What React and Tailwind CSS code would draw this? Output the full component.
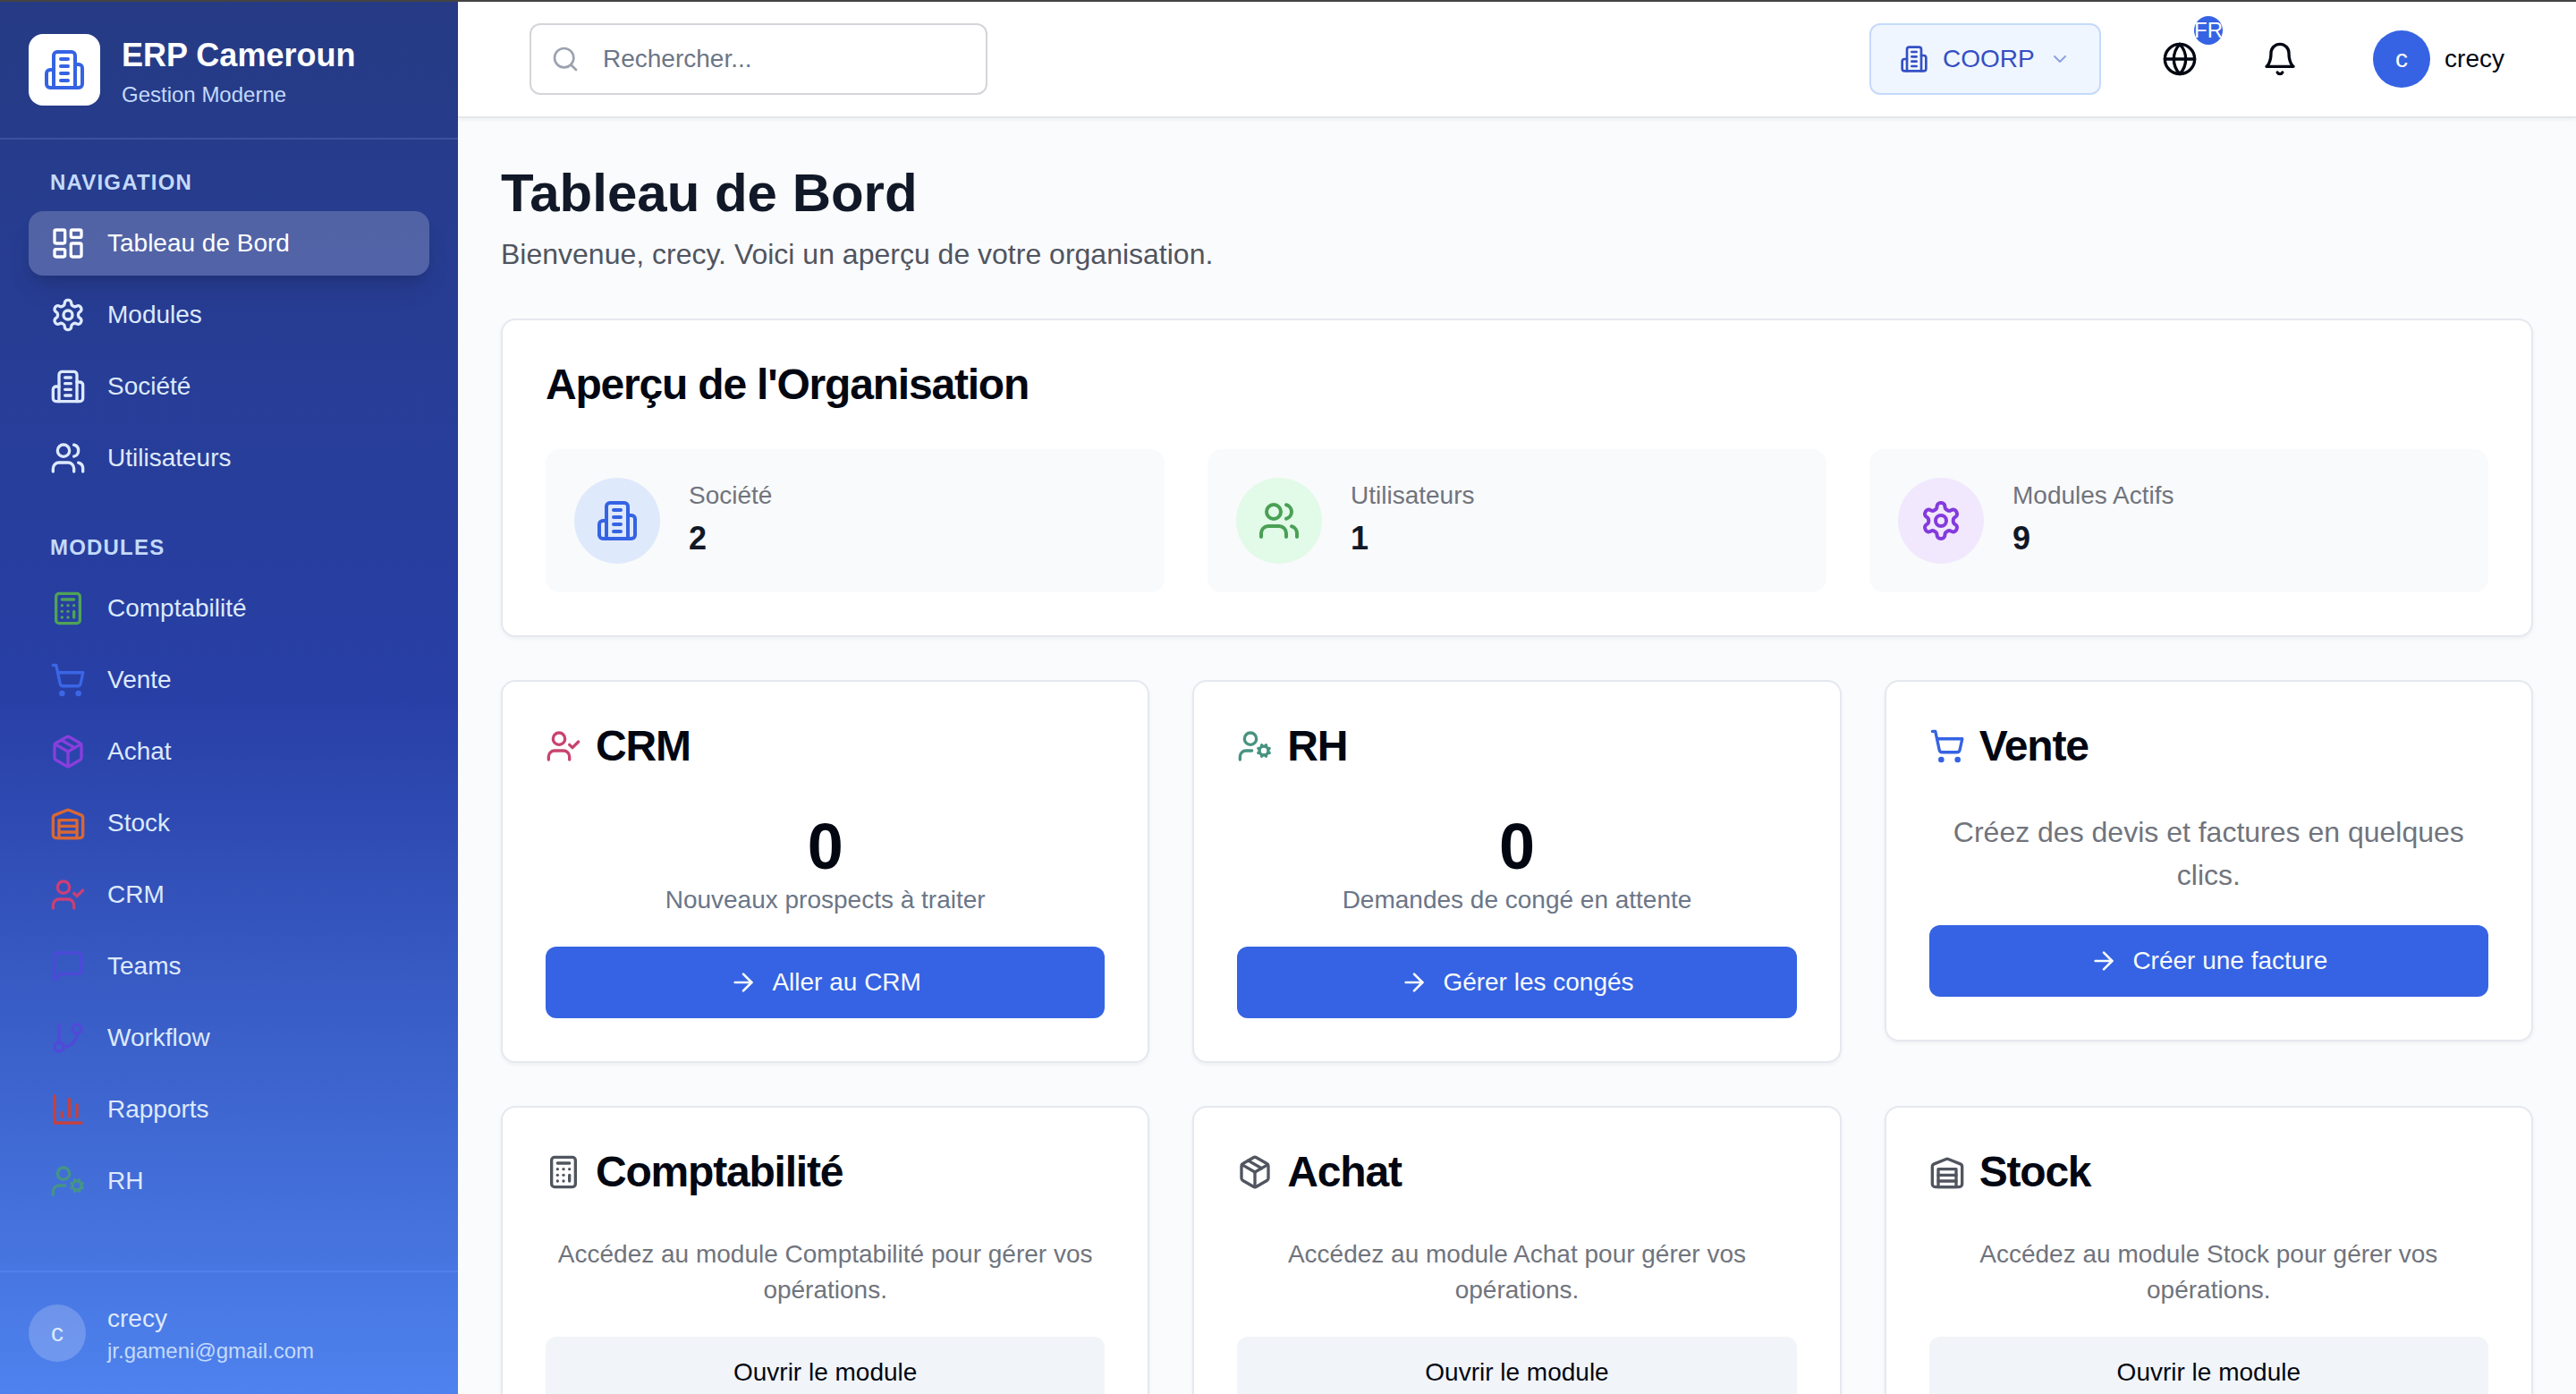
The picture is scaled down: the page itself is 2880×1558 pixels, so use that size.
import {
  ArrowRight,
  Calculator,
  ChevronDown,
  GitBranch,
  Globe,
  LayoutDashboard,
  Package,
  Search,
  ShoppingCart,
  UserCheck,
  UserCog,
  Users
} from 'lucide-react';

const Icon = ({ className, children }) => (
  <svg
    viewBox="0 0 24 24"
    fill="none"
    stroke="currentColor"
    strokeWidth="2"
    strokeLinecap="round"
    strokeLinejoin="round"
    aria-hidden="true"
    className={className}
  >
    {children}
  </svg>
);

const Building = ({ className }) => (
  <Icon className={className}>
    <path d="M6 22V4a2 2 0 0 1 2-2h8a2 2 0 0 1 2 2v18Z" />
    <path d="M6 12H4a2 2 0 0 0-2 2v6a2 2 0 0 0 2 2h2" />
    <path d="M18 9h2a2 2 0 0 1 2 2v9a2 2 0 0 1-2 2h-2" />
    <path d="M10 6h4M10 10h4M10 14h4M10 18h4" />
  </Icon>
);

const Settings = ({ className }) => (
  <Icon className={className}>
    <path d="M12.22 2h-.44a2 2 0 0 0-2 2v.18a2 2 0 0 1-1 1.73l-.43.25a2 2 0 0 1-2 0l-.15-.08a2 2 0 0 0-2.73.73l-.22.38a2 2 0 0 0 .73 2.73l.15.1a2 2 0 0 1 1 1.72v.51a2 2 0 0 1-1 1.74l-.15.09a2 2 0 0 0-.73 2.73l.22.38a2 2 0 0 0 2.73.73l.15-.08a2 2 0 0 1 2 0l.43.25a2 2 0 0 1 1 1.73V20a2 2 0 0 0 2 2h.44a2 2 0 0 0 2-2v-.18a2 2 0 0 1 1-1.73l.43-.25a2 2 0 0 1 2 0l.15.08a2 2 0 0 0 2.73-.73l.22-.39a2 2 0 0 0-.73-2.73l-.15-.08a2 2 0 0 1-1-1.74v-.5a2 2 0 0 1 1-1.74l.15-.09a2 2 0 0 0 .73-2.73l-.22-.38a2 2 0 0 0-2.73-.73l-.15.08a2 2 0 0 1-2 0l-.43-.25a2 2 0 0 1-1-1.73V4a2 2 0 0 0-2-2z" />
    <circle cx="12" cy="12" r="3" />
  </Icon>
);

const Warehouse = ({ className }) => (
  <Icon className={className}>
    <path d="M22 8.35V20a2 2 0 0 1-2 2H4a2 2 0 0 1-2-2V8.35A2 2 0 0 1 3.26 6.5l8-3.2a2 2 0 0 1 1.48 0l8 3.2A2 2 0 0 1 22 8.35Z" />
    <path d="M6 18h12M6 14h12" />
    <rect width="12" height="12" x="6" y="10" />
  </Icon>
);

const MessageSquare = ({ className }) => (
  <Icon className={className}>
    <path d="M21 15a2 2 0 0 1-2 2H7l-4 4V5a2 2 0 0 1 2-2h14a2 2 0 0 1 2 2z" />
  </Icon>
);

const BarChart = ({ className }) => (
  <Icon className={className}>
    <path d="M3 3v18h18M18 17V9M13 17V5M8 17v-3" />
  </Icon>
);

const Bell = ({ className }) => (
  <Icon className={className}>
    <path d="M6 8a6 6 0 0 1 12 0c0 7 3 9 3 9H3s3-2 3-9" />
    <path d="M10.3 21a1.94 1.94 0 0 0 3.4 0" />
  </Icon>
);

const navigation = [
  { label: 'Tableau de Bord', icon: LayoutDashboard, active: true },
  { label: 'Modules', icon: Settings },
  { label: 'Société', icon: Building },
  { label: 'Utilisateurs', icon: Users }
];

const modules = [
  { label: 'Comptabilité', icon: Calculator, color: 'text-[#4fa356]' },
  { label: 'Vente', icon: ShoppingCart, color: 'text-[#3b66e6]' },
  { label: 'Achat', icon: Package, color: 'text-[#883fdc]' },
  { label: 'Stock', icon: Warehouse, color: 'text-[#d96834]' },
  { label: 'CRM', icon: UserCheck, color: 'text-[#cb3f76]' },
  { label: 'Teams', icon: MessageSquare, color: 'text-[#4d49d8]' },
  { label: 'Workflow', icon: GitBranch, color: 'text-[#5149d8]' },
  { label: 'Rapports', icon: BarChart, color: 'text-[#c5423f]' },
  { label: 'RH', icon: UserCog, color: 'text-[#459487]' }
];

const stats = [
  { label: 'Société', value: 2, icon: Building, color: 'bg-[#dfe9fc] text-[#3563e3]' },
  { label: 'Utilisateurs', value: 1, icon: Users, color: 'bg-[#e2fae8] text-[#4aa055]' },
  { label: 'Modules Actifs', value: 9, icon: Settings, color: 'bg-[#f1e8fd] text-[#843bdc]' }
];

const otherModules = [
  { label: 'Comptabilité', icon: Calculator },
  { label: 'Achat', icon: Package },
  { label: 'Stock', icon: Warehouse }
];

const NavSection = ({ title, items }) => (
  <section>
    <h2 className="mb-4 px-6 text-[24px] leading-8 font-bold tracking-wider text-[#c3dafb] uppercase">
      {title}
    </h2>
    <ul className="space-y-2">
      {items.map(({ label, icon: ItemIcon, color, active }) => (
        <li key={label}>
          <a
            href="#"
            className={`flex h-[72px] items-center gap-6 rounded-2xl px-6 text-[28px] leading-10 ${
              active
                ? 'bg-white/20 text-white shadow-[0_20px_30px_-6px_rgba(0,0,0,0.1),0_8px_12px_-4px_rgba(0,0,0,0.1)]'
                : 'text-[#dde9fd]'
            }`}
          >
            <ItemIcon className={`size-10 shrink-0 ${color || ''}`} />
            {label}
          </a>
        </li>
      ))}
    </ul>
  </section>
);

const Sidebar = () => (
  <aside className="flex w-[512px] shrink-0 flex-col bg-linear-to-b/srgb from-[#263b84] via-[#283fa6] to-[#4e82ee]">
    <div className="flex items-center gap-6 border-b-2 border-[#3a52a0] p-8">
      <div className="flex size-20 items-center justify-center rounded-2xl bg-white">
        <Building className="size-12 text-[#3563e3]" />
      </div>
      <div>
        <h1 className="text-[36px] leading-14 font-bold text-white">ERP Cameroun</h1>
        <p className="text-[24px] leading-8 text-[#c3dafb]">Gestion Moderne</p>
      </div>
    </div>
    <nav className="flex-1 space-y-12 p-8">
      <NavSection title="Navigation" items={navigation} />
      <NavSection title="Modules" items={modules} />
    </nav>
    <div className="flex items-center gap-6 border-t-2 border-[#5280ea] p-8">
      <div className="flex size-16 items-center justify-center rounded-full bg-white/20 text-[28px] font-medium text-[#dde9fd]">
        c
      </div>
      <div>
        <p className="text-[28px] leading-10 text-[#dde9fd]">crecy</p>
        <p className="text-[24px] leading-8 text-[#c3dafb]">jr.gameni@gmail.com</p>
      </div>
    </div>
  </aside>
);

const Header = () => (
  <header className="z-10 flex items-center justify-between border-b-2 border-[#e5e7eb] bg-white px-12 py-6 shadow-[0_2px_4px_rgba(0,0,0,0.05)]">
    <div className="relative ml-8 w-[512px]">
      <Search className="absolute top-6 left-6 size-8 text-[#9ca3af]" />
      <input
        type="search"
        aria-label="Rechercher"
        placeholder="Rechercher..."
        className="h-20 w-full rounded-xl border-2 border-[#d3d5d9] bg-white pr-6 pl-20 text-[28px] placeholder:text-[#6b7688]"
      />
    </div>
    <div className="flex items-center gap-8">
      <label className="mr-4 flex h-20 items-center gap-4 rounded-xl border-2 border-[#c5dafb] bg-[#f0f6ff] px-8 text-[#3450c4]">
        <Building className="size-8" />
        <select aria-label="Société" className="appearance-none bg-transparent text-[28px] leading-10">
          <option>COORP</option>
        </select>
        <ChevronDown className="size-6 opacity-50" />
      </label>
      <button aria-label="Langue" className="relative flex size-20 items-center justify-center rounded-xl">
        <Globe className="size-10" />
        <span className="absolute -top-2 -right-2 flex size-8 items-center justify-center rounded-full bg-[#3563e3] text-[24px] leading-8 text-white">
          FR
        </span>
      </button>
      <button aria-label="Notifications" className="flex size-20 items-center justify-center rounded-xl">
        <Bell className="size-10" />
      </button>
      <button className="flex h-20 items-center gap-4 rounded-xl px-8 text-[28px]">
        <span className="flex size-16 items-center justify-center rounded-full bg-[#3563e3] font-medium text-white">
          c
        </span>
        crecy
      </button>
    </div>
  </header>
);

const Card = ({ children }) => (
  <section className="rounded-2xl border-2 border-[#e5e8ee] bg-white p-12 shadow-[0_2px_4px_rgba(0,0,0,0.05)]">
    {children}
  </section>
);

const ModuleCard = ({ title, icon: TitleIcon, color, children }) => (
  <Card>
    <div className="mb-12 flex items-center gap-4">
      <TitleIcon className={`size-10 ${color}`} />
      <h3 className="text-[48px] leading-12 font-bold tracking-tight">{title}</h3>
    </div>
    <div className="text-center">{children}</div>
  </Card>
);

const ActionButton = ({ children }) => (
  <button className="mt-8 flex h-20 w-full items-center justify-center gap-4 rounded-xl bg-[#3563e3] text-[28px] text-[#f8fafc]">
    <ArrowRight className="size-8" />
    {children}
  </button>
);

const Counter = ({ value, label }) => (
  <>
    <p className="text-[72px] leading-20 font-bold">{value}</p>
    <p className="text-[28px] leading-10 text-[#6b7688]">{label}</p>
  </>
);

const App = () => {
  return (
    <div className="flex h-screen overflow-hidden border-t-2 border-[#444444] bg-[#fafbfd] font-['Liberation_Sans',Arial,sans-serif] text-[#030712]">
      <Sidebar />
      <div className="flex min-w-0 flex-1 flex-col">
        <Header />
        <main className="min-h-0 flex-1 space-y-12 overflow-y-auto p-12 [scrollbar-width:none]">
          <div>
            <h1 className="mb-2 text-[60px] leading-18 font-bold text-[#111827]">Tableau de Bord</h1>
            <p className="text-[32px] leading-12 text-[#50555f]">
              Bienvenue, crecy. Voici un aperçu de votre organisation.
            </p>
          </div>

          <Card>
            <h2 className="mb-12 text-[48px] leading-12 font-bold tracking-tight">Aperçu de l'Organisation</h2>
            <div className="grid grid-cols-3 gap-12">
              {stats.map(({ label, value, icon: StatIcon, color }) => (
                <div key={label} className="flex items-center gap-8 rounded-2xl bg-[#f9fafb] p-8">
                  <div className={`flex size-24 items-center justify-center rounded-full ${color}`}>
                    <StatIcon className="size-12" />
                  </div>
                  <div>
                    <p className="text-[28px] leading-10 text-[#70747d]">{label}</p>
                    <p className="text-[36px] leading-14 font-bold text-[#111827]">{value}</p>
                  </div>
                </div>
              ))}
            </div>
          </Card>

          <div className="grid grid-cols-3 items-start gap-12">
            <ModuleCard title="CRM" icon={UserCheck} color="text-[#c8446e]">
              <Counter value={0} label="Nouveaux prospects à traiter" />
              <ActionButton>Aller au CRM</ActionButton>
            </ModuleCard>
            <ModuleCard title="RH" icon={UserCog} color="text-[#479380]">
              <Counter value={0} label="Demandes de congé en attente" />
              <ActionButton>Gérer les congés</ActionButton>
            </ModuleCard>
            <ModuleCard title="Vente" icon={ShoppingCart} color="text-[#3563e3]">
              <p className="text-[32px] leading-12 text-[#70747d]">
                Créez des devis et factures en quelques clics.
              </p>
              <ActionButton>Créer une facture</ActionButton>
            </ModuleCard>

            {otherModules.map(({ label, icon }) => (
              <ModuleCard key={label} title={label} icon={icon} color="text-[#50555f]">
                <p className="text-[28px] leading-10 text-[#70747d]">
                  {`Accédez au module ${label} pour gérer vos opérations.`}
                </p>
                <button className="mt-8 h-20 w-full rounded-xl bg-[#f1f4f8] text-[28px]">
                  Ouvrir le module
                </button>
              </ModuleCard>
            ))}
          </div>
        </main>
      </div>
    </div>
  );
};

export default App;
